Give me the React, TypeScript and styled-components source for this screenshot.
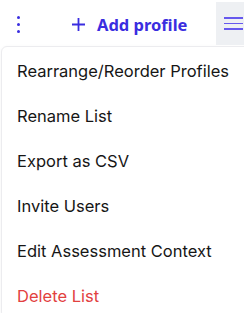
import React from "react";
import styled, { createGlobalStyle } from "styled-components";

const Global = createGlobalStyle`
  html, body { margin: 0; padding: 0; background: #ffffff; overflow: hidden; }
  body { font-family: "Inter", "Noto Sans", sans-serif; }
`;

const Page = styled.div`
  width: 244px;
  height: 313px;
  overflow: hidden;
  position: relative;
`;

const Header = styled.div`
  display: grid;
  grid-template-columns: 54px 145px 45px;
  padding-left: 17px;
  height: 46px;
  align-items: stretch;
`;

const KebabButton = styled.div`
  display: flex;
  flex-direction: column;
  justify-content: center;
  gap: 4px;
  padding-top: 2px;
`;

const Dot = styled.span`
  display: block;
  width: 3px;
  height: 3px;
  border-radius: 50%;
  background: #3a2de0;
`;

const AddButton = styled.div`
  display: flex;
  align-items: center;
  gap: 11px;
  color: #3a2de0;
  font-family: "Noto Sans", sans-serif;
  font-weight: 700;
  font-size: 16.5px;
  padding-top: 3px;
`;

const MenuButton = styled.div`
  margin-top: 2px;
  margin-bottom: 1px;
  background: #eef0f3;
  display: flex;
  flex-direction: column;
  justify-content: center;
  gap: 4px;
  padding-left: 8px;
`;

const Line = styled.span`
  display: block;
  width: 19px;
  height: 1.5px;
  background: #6658ee;
`;

const Menu = styled.div`
  margin-left: 1px;
  width: 260px;
  border: 1px solid #ececef;
  border-radius: 6px;
  box-shadow: 0 1px 4px rgba(0, 0, 0, 0.04);
  background: #fff;
`;

const Item = styled.div<{ $danger?: boolean }>`
  height: 45px;
  display: flex;
  align-items: center;
  padding-left: 15px;
  padding-top: 2px;
  box-sizing: border-box;
  font-size: 16.5px;
  color: ${(p) => (p.$danger ? "#e2413f" : "#161616")};
`;

const items = [
  "Rearrange/Reorder Profiles",
  "Rename List",
  "Export as CSV",
  "Invite Users",
  "Edit Assessment Context",
];

export default function App() {
  return (
    <Page>
      <Global />
      <Header>
        <KebabButton>
          <Dot />
          <Dot />
          <Dot />
        </KebabButton>
        <AddButton>
          <svg width="15" height="15" viewBox="0 0 15 15">
            <path d="M7.5 1v13M1 7.5h13" stroke="#3a2de0" strokeWidth="1.8" />
          </svg>
          Add profile
        </AddButton>
        <MenuButton>
          <Line />
          <Line />
          <Line />
        </MenuButton>
      </Header>
      <Menu>
        {items.map((t) => (
          <Item key={t}>{t}</Item>
        ))}
        <Item $danger>Delete List</Item>
      </Menu>
    </Page>
  );
}
